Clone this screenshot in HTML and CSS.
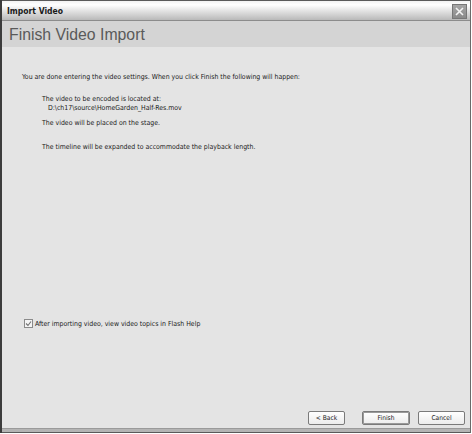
FILE: index.html
```html
<!DOCTYPE html>
<html>
<head>
<meta charset="utf-8">
<link rel="stylesheet" href="styles.css">
</head>
<body>
<div class="window">
  <div class="titlebar">
    <span class="title">Import Video</span>
    <span class="close">
      <svg width="13" height="13" viewBox="0 0 13 13">
        <path d="M3 3 L10 10 M10 3 L3 10" stroke="#f4f4f4" stroke-width="1.6" fill="none"/>
      </svg>
    </span>
  </div>
  <div class="header">Finish Video Import</div>
  <div class="content">
    <p class="intro">You are done entering the video settings. When you click Finish the following will happen:</p>
    <div class="items">
      <p class="item">The video to be encoded is located at:</p>
      <p class="path">D:\ch17\source\HomeGarden_Half-Res.mov</p>
      <p class="item placed">The video will be placed on the stage.</p>
      <p class="item timeline">The timeline will be expanded to accommodate the playback length.</p>
    </div>
    <div class="spacer"></div>
    <label class="check">
      <span class="box">
        <svg width="7" height="7" viewBox="0 0 7 7"><path d="M1 3.5 L3 5.5 L6 1.5" stroke="#707070" stroke-width="1.1" fill="none"/></svg>
      </span>
      <span>After importing video, view video topics in Flash Help</span>
    </label>
    <div class="spacer2"></div>
    <div class="buttons">
      <span class="btn back">&lt; Back</span>
      <span class="btn finish">Finish</span>
      <span class="btn cancel">Cancel</span>
    </div>
  </div>
  <div class="footer"></div>
</div>
</body>
</html>
```

FILE: styles.css
```css
html, body {
  margin: 0;
  padding: 0;
  background: #ffffff;
}
body {
  font-family: "DejaVu Sans Condensed", "DejaVu Sans", "Liberation Sans", sans-serif;
  color: #1a1a1a;
}
.window {
  width: 468px;
  height: 433px;
  border-left: 2px solid #3c3c3c;
  border-right: 1px solid #6a6a6a;
  display: flex;
  flex-direction: column;
  background: #e4e4e4;
}
.titlebar {
  height: 19px;
  border-top: 1px solid #5a5a5a;
  border-bottom: 1px solid #8c8c8c;
  background: linear-gradient(to bottom, #f2f2f2 0%, #ffffff 20%, #dcdcdc 60%, #b9b9b9 100%);
  display: flex;
  align-items: center;
  justify-content: space-between;
  padding: 0 3px 0 5px;
}
.title {
  font-family: "DejaVu Sans Condensed", "DejaVu Sans", sans-serif;
  font-weight: bold;
  font-size: 8.5px;
  color: #1a1a1a;
}
.close {
  width: 13px;
  height: 13px;
  background: linear-gradient(to bottom, #a6a6a6, #8a8a8a);
  border: 1px solid #777;
  display: flex;
  margin-top: 1px;
}
.header {
  height: 26px;
  background: #d4d4d4;
  font-family: "Liberation Sans", Arial, sans-serif;
  font-size: 15.8px;
  color: #5a5a5a;
  padding-left: 7px;
  line-height: 27px;
}
.content {
  flex: 1;
  display: flex;
  flex-direction: column;
  font-size: 6.9px;
  color: #1a1a1a;
  padding: 0 5px 0 20px;
}
.content p {
  margin: 0;
  line-height: 9px;
}
.intro {
  margin-top: 26px !important;
}
.items {
  padding-left: 20px;
  margin-top: 13px;
}
.path {
  padding-left: 6px;
}
.placed {
  margin-top: 6px !important;
}
.timeline {
  margin-top: 15px !important;
}
.spacer {
  flex: 1;
}
.check {
  display: flex;
  align-items: center;
  gap: 2px;
  margin-left: 2px;
}
.box {
  width: 7px;
  height: 7px;
  border: 1px solid #8a8a8a;
  background: #f4f4f4;
  display: flex;
}
.spacer2 {
  height: 83px;
}
.buttons {
  display: flex;
  justify-content: flex-end;
  gap: 8px;
  margin-bottom: 3px;
}
.btn {
  height: 12px;
  border: 1px solid #7a7a7a;
  border-radius: 2px;
  background: linear-gradient(to bottom, #ffffff, #ececec);
  display: flex;
  align-items: center;
  justify-content: center;
  font-size: 6.6px;
  color: #222;
}
.back { width: 35px; margin-right: 9px; }
.finish { width: 46px; box-shadow: inset 0 0 0 1px #9a9a9a; }
.cancel { width: 45px; }
.footer {
  height: 3px;
  border-top: 1px solid #9a9a9a;
  background: #b4b4b4;
  border-bottom: 1px solid #5a5a5a;
}
```
